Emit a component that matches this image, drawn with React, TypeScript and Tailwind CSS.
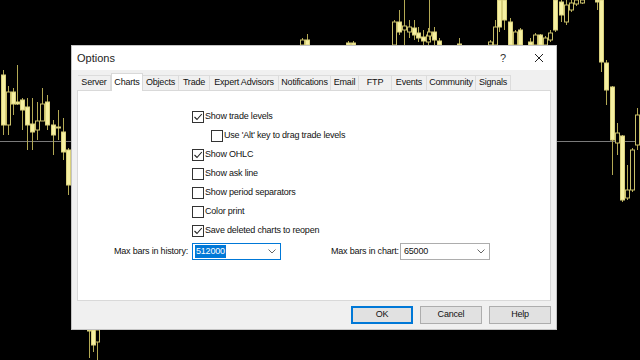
import React from "react";

type Candle = [number, number, number, number, number, boolean];

// x, wick top, wick bottom, body top, body bottom, filled
const candles: Candle[] = [
  // left side
  [3, 70, 135, 75, 125, true],
  [8, 86, 135, 92, 125, false],
  [13, 88, 115, 92, 104, true],
  [17, 65, 105, 102, 104, true],
  [22, 98, 130, 100, 110, true],
  [27, 98, 150, 107, 125, true],
  [32, 98, 150, 124, 132, true],
  [37, 102, 140, 121, 130, false],
  [42, 88, 116, 104, 121, false],
  [47, 95, 130, 102, 125, true],
  [53, 120, 155, 125, 135, true],
  [58, 110, 140, 127, 128, true],
  [63, 118, 160, 132, 152, true],
  [68, 148, 195, 150, 185, true],
  // top strip
  [302, 38, 45, 40, 45, false],
  [307, 34, 45, 40, 45, true],
  [348, 41, 45, 43, 45, true],
  [353, 41, 45, 43, 45, true],
  [394, 20, 45, 22, 45, false],
  [399, 10, 35, 22, 32, true],
  [404, 0, 45, 26, 30, false],
  [409, 20, 38, 27, 32, false],
  [414, 20, 40, 28, 35, true],
  [418, 27, 42, 33, 38, true],
  [423, 30, 45, 37, 41, true],
  [428, 28, 45, 35, 42, false],
  [429, 0, 40, 32, 36, false],
  [434, 27, 45, 32, 40, true],
  [439, 38, 45, 41, 45, true],
  [459, 38, 45, 44, 45, true],
  [490, 40, 45, 42, 45, false],
  [495, 20, 45, 27, 45, false],
  [499, 0, 32, 0, 27, true],
  [504, 0, 30, 0, 20, true],
  [510, 18, 45, 22, 45, true],
  [515, 30, 45, 32, 45, false],
  [520, 28, 45, 30, 45, true],
  [530, 38, 45, 42, 45, true],
  [535, 33, 45, 35, 45, false],
  [540, 34, 45, 35, 45, true],
  [545, 36, 45, 38, 45, false],
  [550, 30, 42, 33, 40, false],
  [555, 0, 32, 0, 30, true],
  // right side
  [561, 0, 22, 2, 15, true],
  [566, 0, 25, 5, 22, false],
  [571, 0, 12, 3, 10, false],
  [576, 0, 6, 0, 4, false],
  [582, 0, 4, 0, 3, false],
  [597, 0, 10, 0, 2, true],
  [601, 0, 72, 0, 62, true],
  [606, 60, 105, 63, 90, true],
  [612, 86, 175, 87, 140, true],
  [617, 123, 155, 133, 143, false],
  [622, 135, 202, 136, 200, true],
  [627, 165, 200, 190, 198, false],
  [632, 148, 192, 150, 190, false],
  [637, 108, 150, 115, 145, false],
  // bottom
  [89, 330, 358, 330, 331, true],
  [93, 330, 352, 330, 345, true],
  [97, 330, 360, 330, 342, false],
];

function Chart() {
  return (
    <svg className="absolute inset-0" width={640} height={360} viewBox="0 0 640 360">
      <line x1={0} y1={141.5} x2={640} y2={141.5} stroke="#7a7a7a" strokeWidth={1} />
      {candles.map(([x, wt, wb, bt, bb, filled], i) => (
        <g key={i}>
          <line x1={x + 0.5} y1={wt} x2={x + 0.5} y2={wb} stroke="#b3a954" strokeWidth={1} />
          <rect
            x={x - 1.5}
            y={bt}
            width={4}
            height={Math.max(1, bb - bt)}
            fill={filled ? "#f6f0a2" : "#000"}
            stroke={filled ? "#d8cf7c" : "#c9bf6a"}
            strokeWidth={1}
          />
        </g>
      ))}
    </svg>
  );
}

const tabs: [string, number][] = [
  ["Server", 33],
  ["Charts", 32],
  ["Objects", 36],
  ["Trade", 31],
  ["Expert Advisors", 69],
  ["Notifications", 52],
  ["Email", 28],
  ["FTP", 33],
  ["Events", 35],
  ["Community", 49],
  ["Signals", 35],
];

function Check({ checked }: { checked: boolean }) {
  return (
    <span className="flex h-[12px] w-[12px] shrink-0 items-center justify-center border border-[#333] bg-white">
      {checked && (
        <svg width={10} height={10} viewBox="0 0 10 10">
          <polyline points="1.5,5 4,7.5 8.8,2" fill="none" stroke="#222" strokeWidth={1.1} />
        </svg>
      )}
    </span>
  );
}

function Row({ label, checked, indent }: { label: string; checked: boolean; indent?: boolean }) {
  return (
    <div className={`flex h-[19px] items-center gap-[1px] ${indent ? "pl-[133px]" : "pl-[114px]"}`}>
      <Check checked={checked} />
      <span>{label}</span>
    </div>
  );
}

function Chevron() {
  return (
    <svg width={8} height={5} viewBox="0 0 8 5">
      <polyline points="0.5,0.5 4,4 7.5,0.5" fill="none" stroke="#555" strokeWidth={0.9} />
    </svg>
  );
}

export default function App() {
  return (
    <div
      className="relative h-[360px] w-[640px] overflow-hidden bg-black text-[9px] tracking-[-0.2px] text-[#111]"
      style={{ fontFamily: '"Liberation Sans", Arial, sans-serif' }}
    >
      <Chart />
      <div className="absolute left-[71px] top-[45px] flex h-[285px] w-[486px] flex-col border border-[#c4c4c4] bg-[#f0f0f0]">
        <div className="flex h-[24px] items-center bg-white pl-[5px] pr-[12px]">
          <span className="text-[11px] tracking-normal text-[#222]">Options</span>
          <span className="ml-auto text-[11px] text-[#333]">?</span>
          <svg className="ml-[28px]" width={10} height={10} viewBox="0 0 10 10">
            <path d="M1 1 L9 9 M9 1 L1 9" stroke="#222" strokeWidth={1} />
          </svg>
        </div>
        <div className="flex h-[20px] items-end pl-[6px]">
          {tabs.map(([t, w]) => {
            const sel = t === "Charts";
            return (
              <div
                key={t}
                style={{ width: w }}
                className={
                  sel
                    ? "relative z-10 -mb-[1px] flex h-[18px] items-center justify-center border border-b-0 border-[#d9d9d9] bg-white"
                    : "flex h-[15px] items-center justify-center border-r border-t border-[#dcdcdc] bg-[#f0f0f0]"
                }
              >
                {t}
              </div>
            );
          })}
        </div>
        <div className="mx-[5px] flex h-[211px] flex-col border border-[#d9d9d9] bg-white pt-[16px]">
          <Row label="Show trade levels" checked />
          <Row label="Use 'Alt' key to drag trade levels" checked={false} indent />
          <Row label="Show OHLC" checked />
          <Row label="Show ask line" checked={false} />
          <Row label="Show period separators" checked={false} />
          <Row label="Color print" checked={false} />
          <Row label="Save deleted charts to reopen" checked />
          <div className="mt-[3px] flex h-[17px] items-center">
            <span className="w-[114px] pr-[4px] text-right">Max bars in history:</span>
            <div className="flex h-[17px] w-[89px] items-center border border-[#0078d7] bg-white pl-[2px] pr-[4px]">
              <span className="bg-[#0078d7] px-[1px] text-white">512000</span>
              <span className="ml-auto">
                <Chevron />
              </span>
            </div>
            <span className="ml-[50px] w-[69px]">Max bars in chart:</span>
            <div className="flex h-[17px] w-[90px] items-center border border-[#adadad] bg-white pl-[3px] pr-[4px]">
              <span>65000</span>
              <span className="ml-auto">
                <Chevron />
              </span>
            </div>
          </div>
        </div>
        <div className="flex flex-1 items-center justify-end gap-[7px] pr-[5px]">
          <button className="h-[18px] w-[62px] border-2 border-[#0078d7] bg-[#e1e1e1]">OK</button>
          <button className="h-[18px] w-[62px] border border-[#adadad] bg-[#e1e1e1]">Cancel</button>
          <button className="h-[18px] w-[62px] border border-[#adadad] bg-[#e1e1e1]">Help</button>
        </div>
      </div>
    </div>
  );
}
